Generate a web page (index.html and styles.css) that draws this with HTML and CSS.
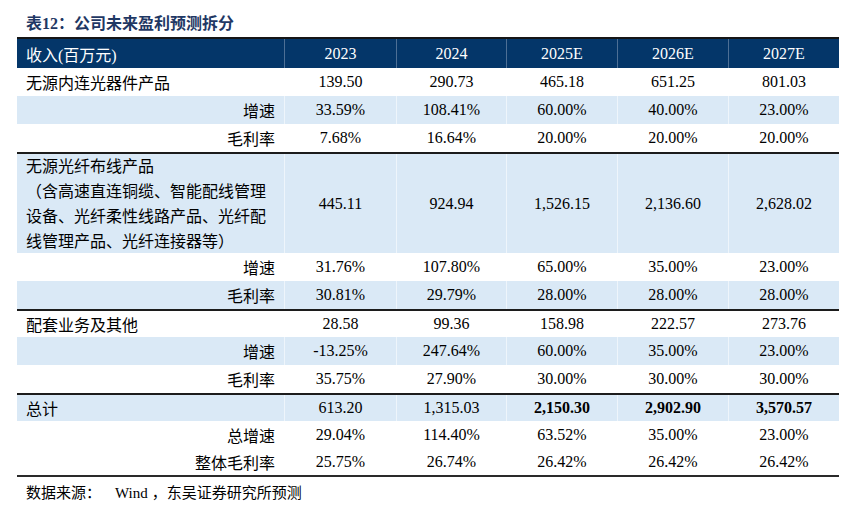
FILE: index.html
```html
<!DOCTYPE html>
<html lang="zh-CN">
<head>
<meta charset="utf-8">
<title>表12：公司未来盈利预测拆分</title>
<link rel="stylesheet" href="styles.css">
</head>
<body>
<div class="page">
  <div class="title">表12：公司未来盈利预测拆分</div>
  <div class="table">
    <div class="row head">
      <div class="cell label">收入(百万元)</div>
      <div class="cell">2023</div>
      <div class="cell">2024</div>
      <div class="cell">2025E</div>
      <div class="cell">2026E</div>
      <div class="cell">2027E</div>
    </div>

    <div class="row">
      <div class="cell label">无源内连光器件产品</div>
      <div class="cell">139.50</div>
      <div class="cell">290.73</div>
      <div class="cell">465.18</div>
      <div class="cell">651.25</div>
      <div class="cell">801.03</div>
    </div>
    <div class="row blue">
      <div class="cell sub">增速</div>
      <div class="cell">33.59%</div>
      <div class="cell">108.41%</div>
      <div class="cell">60.00%</div>
      <div class="cell">40.00%</div>
      <div class="cell">23.00%</div>
    </div>
    <div class="row">
      <div class="cell sub">毛利率</div>
      <div class="cell">7.68%</div>
      <div class="cell">16.64%</div>
      <div class="cell">20.00%</div>
      <div class="cell">20.00%</div>
      <div class="cell">20.00%</div>
    </div>

    <div class="row blue group tall">
      <div class="cell label multi">
        <div>无源光纤布线产品</div>
        <div>（含高速直连铜缆、智能配线管理</div>
        <div>设备、光纤柔性线路产品、光纤配</div>
        <div>线管理产品、光纤连接器等）</div>
      </div>
      <div class="cell">445.11</div>
      <div class="cell">924.94</div>
      <div class="cell">1,526.15</div>
      <div class="cell">2,136.60</div>
      <div class="cell">2,628.02</div>
    </div>
    <div class="row">
      <div class="cell sub">增速</div>
      <div class="cell">31.76%</div>
      <div class="cell">107.80%</div>
      <div class="cell">65.00%</div>
      <div class="cell">35.00%</div>
      <div class="cell">23.00%</div>
    </div>
    <div class="row blue">
      <div class="cell sub">毛利率</div>
      <div class="cell">30.81%</div>
      <div class="cell">29.79%</div>
      <div class="cell">28.00%</div>
      <div class="cell">28.00%</div>
      <div class="cell">28.00%</div>
    </div>

    <div class="row group">
      <div class="cell label">配套业务及其他</div>
      <div class="cell">28.58</div>
      <div class="cell">99.36</div>
      <div class="cell">158.98</div>
      <div class="cell">222.57</div>
      <div class="cell">273.76</div>
    </div>
    <div class="row blue">
      <div class="cell sub">增速</div>
      <div class="cell">-13.25%</div>
      <div class="cell">247.64%</div>
      <div class="cell">60.00%</div>
      <div class="cell">35.00%</div>
      <div class="cell">23.00%</div>
    </div>
    <div class="row">
      <div class="cell sub">毛利率</div>
      <div class="cell">35.75%</div>
      <div class="cell">27.90%</div>
      <div class="cell">30.00%</div>
      <div class="cell">30.00%</div>
      <div class="cell">30.00%</div>
    </div>

    <div class="row blue group">
      <div class="cell label">总计</div>
      <div class="cell">613.20</div>
      <div class="cell">1,315.03</div>
      <div class="cell bold">2,150.30</div>
      <div class="cell bold">2,902.90</div>
      <div class="cell bold">3,570.57</div>
    </div>
    <div class="row">
      <div class="cell sub">总增速</div>
      <div class="cell">29.04%</div>
      <div class="cell">114.40%</div>
      <div class="cell">63.52%</div>
      <div class="cell">35.00%</div>
      <div class="cell">23.00%</div>
    </div>
    <div class="row last">
      <div class="cell sub">整体毛利率</div>
      <div class="cell">25.75%</div>
      <div class="cell">26.74%</div>
      <div class="cell">26.42%</div>
      <div class="cell">26.42%</div>
      <div class="cell">26.42%</div>
    </div>
  </div>
  <div class="source">数据来源：<span class="src-name">Wind</span>，东吴证券研究所预测</div>
</div>
</body>
</html>
```

FILE: styles.css
```css
html, body {
  margin: 0;
  padding: 0;
  background: #ffffff;
}

.page {
  width: 822px;
  padding-left: 17px;
  font-family: "Liberation Serif", "Noto Sans CJK SC", serif;
  color: #000000;
}

.title {
  padding-top: 14px;
  height: 20px;
  line-height: 20px;
  margin-bottom: 3px;
  padding-left: 9px;
  font-size: 16px;
  font-weight: bold;
  color: #1f3864;
}

.table {
  display: flex;
  flex-direction: column;
  font-size: 16px;
}

.row {
  display: grid;
  grid-template-columns: 267px 112px 110px 111px 111px 111px;
  height: 28px;
  box-sizing: border-box;
}

.row.blue {
  background: #dae9f6;
}

.row.group {
  border-top: 2px solid #1c1c1c;
}

.row.tall {
  height: 101px;
}

.row.last {
  border-bottom: 2px solid #2a2a2a;
  height: 28px;
}

.row.head {
  height: 31px;
  background: #043669;
  color: #ffffff;
  border-top: 2px solid #161616;
}

.cell {
  display: flex;
  align-items: center;
  justify-content: center;
  white-space: nowrap;
  border-left: 1px solid rgba(255, 255, 255, 0.55);
}

.cell:first-child {
  border-left: none;
}

.row.head .cell {
  border-left-color: #4d6f95;
}

.row.head .cell:first-child {
  border-left: none;
}

.cell.label {
  justify-content: flex-start;
  padding-left: 9px;
}

.cell.sub {
  justify-content: flex-end;
  padding-right: 9px;
}

.cell.multi {
  flex-direction: column;
  align-items: flex-start;
  justify-content: center;
  line-height: 25px;
}

.cell.bold {
  font-weight: bold;
}

.source {
  margin-top: 6px;
  padding-left: 9px;
  height: 20px;
  line-height: 20px;
  font-size: 15px;
}

.src-name {
  margin: 0 4px 0 14px;
}
```
